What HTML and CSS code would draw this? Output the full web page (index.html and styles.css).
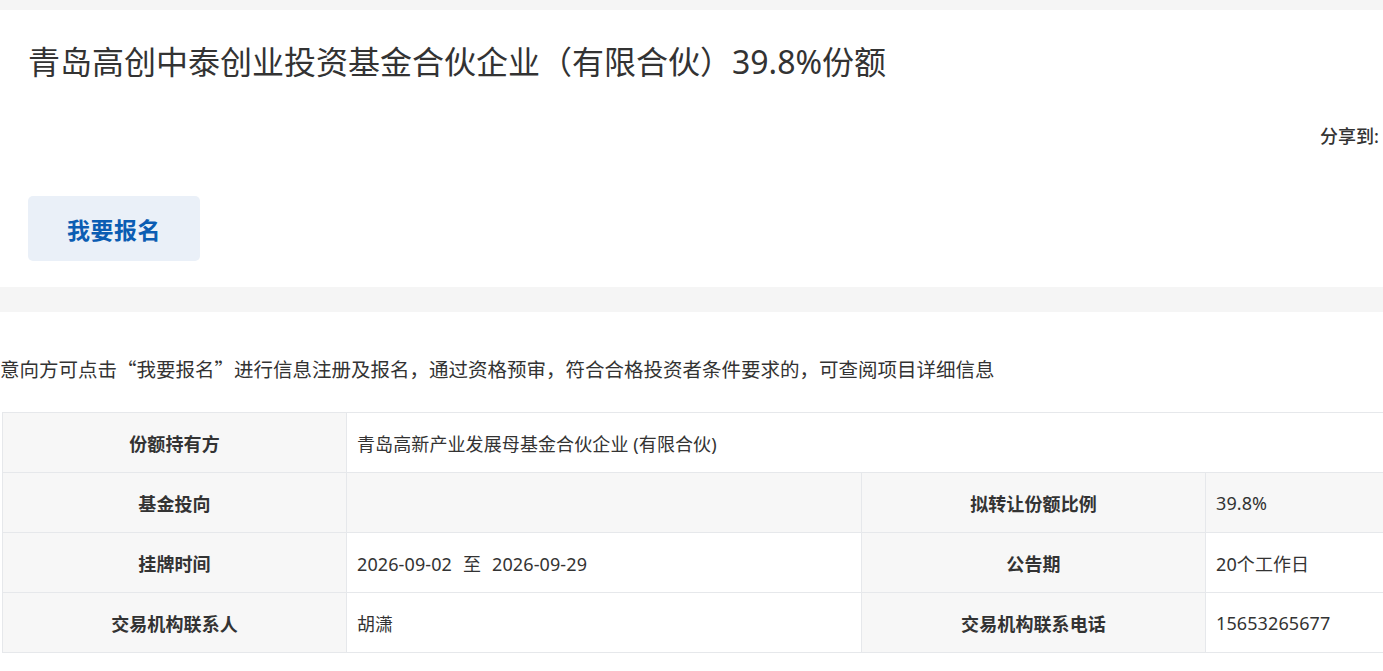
FILE: index.html
```html
<!DOCTYPE html>
<html lang="zh-CN">
<head>
<meta charset="utf-8">
<title>青岛高创中泰创业投资基金合伙企业（有限合伙）39.8%份额</title>
<link rel="stylesheet" href="styles.css">
</head>
<body>
<div class="band band-top"></div>
<section class="header">
  <h1 class="title">青岛高创中泰创业投资基金合伙企业（有限合伙）39.8%份额</h1>
  <div class="share">分享到:</div>
  <a class="signup" href="#">我要报名</a>
</section>
<div class="band band-mid"></div>
<section class="detail">
  <p class="notice">意向方可点击“我要报名”进行信息注册及报名，通过资格预审，符合合格投资者条件要求的，可查阅项目详细信息</p>
  <table class="info">
    <colgroup>
      <col class="c-label"><col class="c-value"><col class="c-label"><col class="c-rest">
    </colgroup>
    <tbody>
      <tr>
        <th>份额持有方</th>
        <td colspan="3">青岛高新产业发展母基金合伙企业 (有限合伙)</td>
      </tr>
      <tr class="alt">
        <th>基金投向</th>
        <td></td>
        <th>拟转让份额比例</th>
        <td>39.8%</td>
      </tr>
      <tr>
        <th>挂牌时间</th>
        <td>2026-09-02<span class="sep">至</span>2026-09-29</td>
        <th>公告期</th>
        <td>20个工作日</td>
      </tr>
      <tr>
        <th>交易机构联系人</th>
        <td>胡潇</td>
        <th>交易机构联系电话</th>
        <td>15653265677</td>
      </tr>
    </tbody>
  </table>
</section>
</body>
</html>
```

FILE: styles.css
```css
html, body {
  margin: 0;
  padding: 0;
  background: #fff;
  overflow: hidden;
}

body {
  font-family: "Noto Sans", "Noto Sans CJK SC", sans-serif;
  color: #333;
}

.band {
  background: #f5f5f5;
}

.band-top {
  height: 10px;
}

.band-mid {
  height: 25px;
}

.header {
  display: flex;
  flex-direction: column;
  align-items: flex-start;
  padding: 28px 4px 26px 28px;
}

.title {
  margin: 0;
  font-size: 32px;
  font-weight: 400;
  line-height: 48px;
  color: #333;
}

.share {
  align-self: flex-end;
  margin-top: 38px;
  font-size: 18px;
  font-weight: 500;
  line-height: 24px;
  color: #333;
}

.signup {
  margin-top: 48px;
  width: 172px;
  height: 65px;
  display: flex;
  align-items: center;
  justify-content: center;
  background: #eaf0f8;
  border-radius: 5px;
  color: #0b5db3;
  font-size: 23px;
  font-weight: 700;
  text-decoration: none;
  letter-spacing: 0.5px;
}

.detail {
  padding: 42px 0 0 2px;
}

.notice {
  margin: 0 0 28px -2px;
  font-family: "Noto Sans CJK SC", sans-serif;
  font-size: 19.5px;
  line-height: 30px;
  color: #333;
  white-space: nowrap;
}

.info {
  width: 1400px;
  table-layout: fixed;
  border-collapse: collapse;
  font-size: 18px;
}

.c-label { width: 344px; }
.c-value { width: 515px; }
.c-rest { width: 197px; }

.info th,
.info td {
  height: 59px;
  border: 1px solid #e6e8eb;
  padding: 0 10px;
  white-space: nowrap;
  letter-spacing: 0.1px;
}

.info th {
  background: #f7f7f7;
  font-weight: 700;
  text-align: center;
}

.info td {
  text-align: left;
}

.info tr.alt td {
  background: #f7f7f7;
}

/* range separator between the two listing dates */
.sep {
  margin: 0 11px;
}
```
